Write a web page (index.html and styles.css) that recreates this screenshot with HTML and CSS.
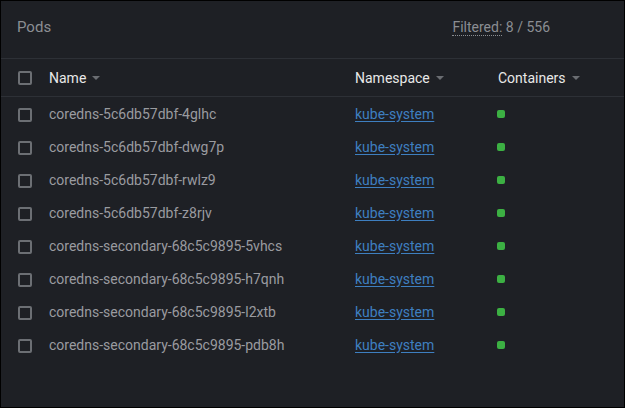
FILE: index.html
```html
<!DOCTYPE html>
<html>
<head>
<meta charset="utf-8">
<link rel="stylesheet" href="styles.css">
</head>
<body>
<div class="frame">
  <div class="topbar">
    <div class="title">Pods</div>
    <div class="count"><span class="dotted">Filtered:</span> 8 / 556</div>
  </div>
  <div class="table">
    <div class="row head">
      <span class="cb"></span>
      <span class="cell">Name <i class="caret"></i></span>
      <span class="cell">Namespace <i class="caret"></i></span>
      <span class="cell">Containers <i class="caret"></i></span>
    </div>
    <div class="row"><span class="cb"></span><span class="cell name">coredns-5c6db57dbf-4glhc</span><span class="cell"><a href="#">kube-system</a></span><span class="cell"><i class="dot"></i></span></div>
    <div class="row"><span class="cb"></span><span class="cell name">coredns-5c6db57dbf-dwg7p</span><span class="cell"><a href="#">kube-system</a></span><span class="cell"><i class="dot"></i></span></div>
    <div class="row"><span class="cb"></span><span class="cell name">coredns-5c6db57dbf-rwlz9</span><span class="cell"><a href="#">kube-system</a></span><span class="cell"><i class="dot"></i></span></div>
    <div class="row"><span class="cb"></span><span class="cell name">coredns-5c6db57dbf-z8rjv</span><span class="cell"><a href="#">kube-system</a></span><span class="cell"><i class="dot"></i></span></div>
    <div class="row"><span class="cb"></span><span class="cell name">coredns-secondary-68c5c9895-5vhcs</span><span class="cell"><a href="#">kube-system</a></span><span class="cell"><i class="dot"></i></span></div>
    <div class="row"><span class="cb"></span><span class="cell name">coredns-secondary-68c5c9895-h7qnh</span><span class="cell"><a href="#">kube-system</a></span><span class="cell"><i class="dot"></i></span></div>
    <div class="row"><span class="cb"></span><span class="cell name">coredns-secondary-68c5c9895-l2xtb</span><span class="cell"><a href="#">kube-system</a></span><span class="cell"><i class="dot"></i></span></div>
    <div class="row"><span class="cb"></span><span class="cell name">coredns-secondary-68c5c9895-pdb8h</span><span class="cell"><a href="#">kube-system</a></span><span class="cell"><i class="dot"></i></span></div>
  </div>
</div>
</body>
</html>
```
FILE: styles.css
```css
* { box-sizing: border-box; }
html, body { margin: 0; padding: 0; background: #000; }
body { font-family: Roboto, "Liberation Sans", sans-serif; }
.frame {
  width: 625px;
  height: 408px;
  border: 1px solid #000;
  background: #1e2025;
  overflow: hidden;
}
.topbar {
  height: 58px;
  display: flex;
  align-items: center;
  justify-content: space-between;
  padding: 0 74px 6px 16px;
  border-bottom: 1px solid #2d3036;
}
.title { font-size: 15px; color: #8b8e93; }
.count { font-size: 14px; color: #8b8e93; }
.dotted { border-bottom: 1px dotted #8b8e93; }
.row {
  display: grid;
  grid-template-columns: 31px 306px 143px 1fr;
  align-items: center;
  padding-left: 17px;
  height: 33px;
}
.row.head {
  height: 38px;
  border-bottom: 1px solid #2d3036;
  color: #e8e8e8;
}
.cb {
  width: 14px;
  height: 14px;
  border: 2px solid #6c6f74;
  border-radius: 2px;
  display: block;
}
.row:not(.head) .cb { margin-top: 3px; }
.cell { font-size: 14px; white-space: nowrap; display: flex; align-items: center; }
.name { color: #9a9ba0; }
a { color: #3e7fc0; text-decoration: underline; text-underline-offset: 2px; }
.caret {
  display: inline-block;
  width: 0; height: 0;
  border-left: 4.5px solid transparent;
  border-right: 4.5px solid transparent;
  border-top: 4.5px solid #6a6d72;
  margin-left: 6px;
  margin-top: 1px;
}
.dot {
  display: block;
  width: 8px; height: 8px;
  border-radius: 2px;
  background: #3cb043;
  margin-left: -1px;
}
```
